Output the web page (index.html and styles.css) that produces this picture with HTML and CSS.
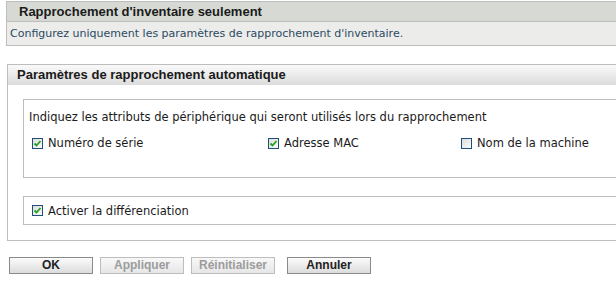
FILE: index.html
```html
<!DOCTYPE html>
<html lang="fr">
<head>
  <meta charset="UTF-8" />
  <title>Rapprochement d'inventaire</title>
  <link rel="stylesheet" href="styles.css">
</head>
<body>

  <!-- Bloc d'info -->
  <section class="info-box">
    <h1 class="info-title">Rapprochement d'inventaire seulement</h1>
    <p class="info-desc">Configurez uniquement les paramètres de rapprochement d'inventaire.</p>
  </section>

  <!-- Paramètres -->
  <section class="settings">
    <h2 class="settings-title">Paramètres de rapprochement automatique</h2>

    <div class="group">
      <p class="group-label">Indiquez les attributs de périphérique qui seront utilisés lors du rapprochement</p>
      <div class="attr-row">
        <label class="check">
          <span class="cb on">
            <svg viewBox="0 0 9 9"><path d="M1.5 4.5 L3.5 6.5 L7.5 2" fill="none" stroke="currentColor" stroke-width="1.8"/></svg>
          </span>
          Numéro de série
        </label>
        <label class="check">
          <span class="cb on">
            <svg viewBox="0 0 9 9"><path d="M1.5 4.5 L3.5 6.5 L7.5 2" fill="none" stroke="currentColor" stroke-width="1.8"/></svg>
          </span>
          Adresse MAC
        </label>
        <label class="check">
          <span class="cb"></span>
          Nom de la machine
        </label>
      </div>
    </div>

    <div class="group group-small">
      <label class="check">
        <span class="cb on">
          <svg viewBox="0 0 9 9"><path d="M1.5 4.5 L3.5 6.5 L7.5 2" fill="none" stroke="currentColor" stroke-width="1.8"/></svg>
        </span>
        Activer la différenciation
      </label>
    </div>
  </section>

  <!-- Boutons -->
  <div class="buttons">
    <button class="btn">OK</button>
    <button class="btn" disabled>Appliquer</button>
    <button class="btn" disabled>Réinitialiser</button>
    <button class="btn btn-cancel">Annuler</button>
  </div>

</body>
</html>
```

FILE: styles.css
```css
:root {
  --border: #bdbdbd;
  --title-bg: #d7dad4;
  --desc-bg: #ececea;
  --desc-text: #2b4a63;
  --text: #1a1a1a;
}

* {
  box-sizing: border-box;
  margin: 0;
  padding: 0;
}
body {
  background: #fff;
  font-family: "DejaVu Sans", Verdana, sans-serif;
  font-size: 11.5px;
  color: var(--text);
  overflow: hidden;
  padding-top: 1px;
}

/* Bloc d'info */
.info-box {
  margin-left: 6px;
  width: 700px;
  border: 1px solid var(--border);
}
.info-title {
  background: var(--title-bg);
  border-bottom: 1px solid var(--border);
  font-family: "Liberation Sans", Arial, sans-serif;
  font-size: 13px;
  font-weight: bold;
  line-height: 19px;
  height: 20px;
  padding-left: 12px;
}
.info-desc {
  background: var(--desc-bg);
  color: var(--desc-text);
  font-size: 11px;
  line-height: 23px;
  height: 23px;
  padding-left: 3px;
}

/* Paramètres */
.settings {
  margin: 18px 0 0 7px;
  width: 700px;
  border: 1px solid var(--border);
  padding-bottom: 15px;
}
.settings-title {
  background: linear-gradient(#fafafa, #dcdcdc);
  font-family: "Liberation Sans", Arial, sans-serif;
  font-size: 13px;
  font-weight: bold;
  line-height: 20px;
  height: 20px;
  padding-left: 9px;
}
.group {
  margin: 14px 0 0 15px;
  border: 1px solid var(--border);
  height: 79px;
  padding: 9px 0 0 5px;
}
.group-small {
  margin-top: 18px;
  height: 29px;
  padding: 0 0 0 8px;
  display: flex;
  align-items: center;
}
.group-label {
  line-height: 16px;
}
.attr-row {
  display: grid;
  grid-template-columns: 236px 193px auto;
  margin: 10px 0 0 3px;
}

/* Cases à cocher */
.check {
  display: flex;
  align-items: center;
  gap: 5px;
  line-height: 16px;
}
.cb {
  width: 11px;
  height: 11px;
  border: 1px solid #1d4e7c;
  background: linear-gradient(135deg, #dcdcd8, #fbfbfb);
  display: flex;
  align-items: center;
  justify-content: center;
  color: #22a322;
}
.cb svg {
  width: 9px;
  height: 9px;
}

/* Boutons */
.buttons {
  display: flex;
  gap: 7px;
  margin: 16px 0 0 9px;
}
.btn {
  width: 84px;
  height: 17px;
  border: 1px solid #8a8a8a;
  background: linear-gradient(#fbfbfb, #dcdcdc);
  font-family: "Liberation Sans", Arial, sans-serif;
  font-size: 12px;
  font-weight: bold;
  color: #222;
  line-height: 15px;
}
.btn:disabled {
  border-color: #bdbdbd;
  color: #9c9c9c;
  background: linear-gradient(#f8f8f8, #e6e6e6);
}
.btn-cancel {
  margin-left: 5px;
}
```
